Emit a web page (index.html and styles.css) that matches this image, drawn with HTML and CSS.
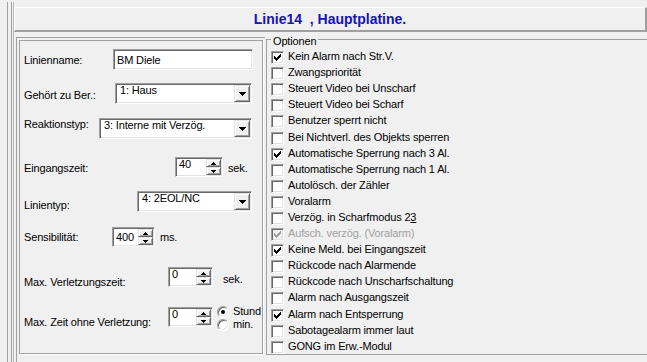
FILE: index.html
```html
<!DOCTYPE html>
<html lang="de">
<head>
<meta charset="utf-8">
<title>Linie14</title>
<link rel="stylesheet" href="styles.css">
</head>
<body>
<div class="app">
  <div class="rails"><div class="rail r1"></div><div class="rail r2"></div><div class="rail r3"></div></div>
  <div class="main">
    <div class="title">Linie14  , Hauptplatine.</div>
    <div class="content">
      <div class="leftpanel">
        <div class="leftbox">
          <div class="row f-name">
            <span class="lbl">Linienname:</span>
            <div class="edit edit-name">BM Diele</div>
          </div>
          <div class="row f-ber">
            <span class="lbl">Gehört zu Ber.:</span>
            <div class="combo combo-ber"><span class="val">1: Haus</span><span class="dd"><svg width="7" height="4" viewBox="0 0 7 4" shape-rendering="crispEdges"><path d="M0 0h7v1h-7z M1 1h5v1h-5z M2 2h3v1h-3z M3 3h1v1h-1z" fill="#000"/></svg></span></div>
          </div>
          <div class="row f-reak">
            <span class="lbl">Reaktionstyp:</span>
            <div class="combo combo-reak"><span class="val">3: Interne mit Verzög.</span><span class="dd"><svg width="7" height="4" viewBox="0 0 7 4" shape-rendering="crispEdges"><path d="M0 0h7v1h-7z M1 1h5v1h-5z M2 2h3v1h-3z M3 3h1v1h-1z" fill="#000"/></svg></span></div>
          </div>
          <div class="row f-eing">
            <span class="lbl">Eingangszeit:</span>
            <div class="spin spin-eing"><span class="val">40</span><span class="spinbtn"><span class="sb"><svg width="5" height="3" viewBox="0 0 5 3" shape-rendering="crispEdges"><path d="M2 0h1v1h-1z M1 1h3v1h-3z M0 2h5v1h-5z" fill="#000"/></svg></span><span class="sb"><svg width="5" height="3" viewBox="0 0 5 3" shape-rendering="crispEdges"><path d="M0 0h5v1h-5z M1 1h3v1h-3z M2 2h1v1h-1z" fill="#000"/></svg></span></span></div>
            <span class="unit unit-eing">sek.</span>
          </div>
          <div class="row f-typ">
            <span class="lbl">Linientyp:</span>
            <div class="combo combo-typ"><span class="val">4: 2EOL/NC</span><span class="dd"><svg width="7" height="4" viewBox="0 0 7 4" shape-rendering="crispEdges"><path d="M0 0h7v1h-7z M1 1h5v1h-5z M2 2h3v1h-3z M3 3h1v1h-1z" fill="#000"/></svg></span></div>
          </div>
          <div class="row f-sens">
            <span class="lbl">Sensibilität:</span>
            <div class="spin spin-sens"><span class="val">400</span><span class="spinbtn"><span class="sb"><svg width="5" height="3" viewBox="0 0 5 3" shape-rendering="crispEdges"><path d="M2 0h1v1h-1z M1 1h3v1h-3z M0 2h5v1h-5z" fill="#000"/></svg></span><span class="sb"><svg width="5" height="3" viewBox="0 0 5 3" shape-rendering="crispEdges"><path d="M0 0h5v1h-5z M1 1h3v1h-3z M2 2h1v1h-1z" fill="#000"/></svg></span></span></div>
            <span class="unit unit-sens">ms.</span>
          </div>
          <div class="row f-maxv">
            <span class="lbl">Max. Verletzungszeit:</span>
            <div class="spin spin-max"><span class="val">0</span><span class="spinbtn"><span class="sb"><svg width="5" height="3" viewBox="0 0 5 3" shape-rendering="crispEdges"><path d="M2 0h1v1h-1z M1 1h3v1h-3z M0 2h5v1h-5z" fill="#000"/></svg></span><span class="sb"><svg width="5" height="3" viewBox="0 0 5 3" shape-rendering="crispEdges"><path d="M0 0h5v1h-5z M1 1h3v1h-3z M2 2h1v1h-1z" fill="#000"/></svg></span></span></div>
            <span class="unit unit-maxv">sek.</span>
          </div>
          <div class="row f-maxz">
            <span class="lbl">Max. Zeit ohne Verletzung:</span>
            <div class="spin spin-max"><span class="val">0</span><span class="spinbtn"><span class="sb"><svg width="5" height="3" viewBox="0 0 5 3" shape-rendering="crispEdges"><path d="M2 0h1v1h-1z M1 1h3v1h-3z M0 2h5v1h-5z" fill="#000"/></svg></span><span class="sb"><svg width="5" height="3" viewBox="0 0 5 3" shape-rendering="crispEdges"><path d="M0 0h5v1h-5z M1 1h3v1h-3z M2 2h1v1h-1z" fill="#000"/></svg></span></span></div>
            <div class="radios">
              <div class="radio"><span class="rb on"></span><span>Stund</span></div>
              <div class="radio"><span class="rb"></span><span>min.</span></div>
            </div>
          </div>
        </div>
      </div>
      <fieldset class="options">
        <legend>Optionen</legend>
        <div class="opt"><span class="cb"><svg width="7" height="7" viewBox="0 0 7 7" shape-rendering="crispEdges"><path d="M0 2h1v3h-1z M1 3h1v3h-1z M2 4h1v3h-1z M3 3h1v3h-1z M4 2h1v3h-1z M5 1h1v3h-1z M6 0h1v3h-1z" fill="#000"/></svg></span><span class="t">Kein Alarm nach Str.V.</span></div>
        <div class="opt"><span class="cb"></span><span class="t">Zwangspriorität</span></div>
        <div class="opt"><span class="cb"></span><span class="t">Steuert Video bei Unscharf</span></div>
        <div class="opt"><span class="cb"></span><span class="t">Steuert Video bei Scharf</span></div>
        <div class="opt"><span class="cb"></span><span class="t">Benutzer sperrt nicht</span></div>
        <div class="opt"><span class="cb"></span><span class="t">Bei Nichtverl. des Objekts sperren</span></div>
        <div class="opt"><span class="cb"><svg width="7" height="7" viewBox="0 0 7 7" shape-rendering="crispEdges"><path d="M0 2h1v3h-1z M1 3h1v3h-1z M2 4h1v3h-1z M3 3h1v3h-1z M4 2h1v3h-1z M5 1h1v3h-1z M6 0h1v3h-1z" fill="#000"/></svg></span><span class="t">Automatische Sperrung nach 3 Al.</span></div>
        <div class="opt"><span class="cb"></span><span class="t">Automatische Sperrung nach 1 Al.</span></div>
        <div class="opt"><span class="cb"></span><span class="t">Autolösch. der Zähler</span></div>
        <div class="opt"><span class="cb"></span><span class="t">Voralarm</span></div>
        <div class="opt"><span class="cb"></span><span class="t">Verzög. in Scharfmodus 2<u>3</u></span></div>
        <div class="opt dis"><span class="cb"><svg width="7" height="7" viewBox="0 0 7 7" shape-rendering="crispEdges"><path d="M0 2h1v3h-1z M1 3h1v3h-1z M2 4h1v3h-1z M3 3h1v3h-1z M4 2h1v3h-1z M5 1h1v3h-1z M6 0h1v3h-1z" fill="#a0a0a0"/></svg></span><span class="t">Aufsch. verzög. (Voralarm)</span></div>
        <div class="opt"><span class="cb"><svg width="7" height="7" viewBox="0 0 7 7" shape-rendering="crispEdges"><path d="M0 2h1v3h-1z M1 3h1v3h-1z M2 4h1v3h-1z M3 3h1v3h-1z M4 2h1v3h-1z M5 1h1v3h-1z M6 0h1v3h-1z" fill="#000"/></svg></span><span class="t">Keine Meld. bei Eingangszeit</span></div>
        <div class="opt"><span class="cb"></span><span class="t">Rückcode nach Alarmende</span></div>
        <div class="opt"><span class="cb"></span><span class="t">Rückcode nach Unscharfschaltung</span></div>
        <div class="opt"><span class="cb"></span><span class="t">Alarm nach Ausgangszeit</span></div>
        <div class="opt"><span class="cb"><svg width="7" height="7" viewBox="0 0 7 7" shape-rendering="crispEdges"><path d="M0 2h1v3h-1z M1 3h1v3h-1z M2 4h1v3h-1z M3 3h1v3h-1z M4 2h1v3h-1z M5 1h1v3h-1z M6 0h1v3h-1z" fill="#000"/></svg></span><span class="t">Alarm nach Entsperrung</span></div>
        <div class="opt"><span class="cb"></span><span class="t">Sabotagealarm immer laut</span></div>
        <div class="opt"><span class="cb"></span><span class="t">GONG im Erw.-Modul</span></div>
      </fieldset>
    </div>
  </div>
</div>
</body>
</html>
```

FILE: styles.css
```css
* { box-sizing: border-box; }
html, body { margin: 0; padding: 0; }
body {
  width: 647px;
  height: 362px;
  overflow: hidden;
  background: #f0f0f0;
  font-family: "Liberation Sans", Arial, sans-serif;
  font-size: 11px;
  letter-spacing: -0.15px;
  color: #000;
}
.app { display: flex; height: 362px; }

.rails { display: flex; flex: none; width: 14px; padding-left: 7px; margin-top: 2px; }
.rail { border-left: 1px solid #a0a0a0; }
.r1 { width: 4px; }
.r2 { width: 2px; }
.r3 { width: 1px; border-left-color: #b9b9b9; }

.main { flex: 1; display: flex; flex-direction: column; min-width: 0; }
.title {
  margin-top: 7px;
  height: 25px;
  border-top: 1px solid #fff;
  border-left: 1px solid #fff;
  border-bottom: 2px solid #a0a0a0;
  border-right: 2px solid #a0a0a0;
  text-align: center;
  font-weight: bold;
  font-size: 14px;
  line-height: 22px;
  letter-spacing: 0;
  color: #1414b8;
  white-space: pre;
}

.content { display: flex; align-items: flex-start; }

.leftpanel {
  flex: none;
  margin: 5px 0 0 2px;
  border-top: 1px solid #a0a0a0;
  border-left: 1px solid #a0a0a0;
  padding: 2px 2px 10px 2px;
}
.leftbox {
  width: 244px;
  height: 314px;
  border: 1px solid #a0a0a0;
  box-shadow: 1px 1px 0 #fff;
  overflow: hidden;
  padding-left: 4px;
}

.row { display: flex; align-items: flex-start; white-space: nowrap; }
.lbl { flex: none; line-height: 13px; white-space: nowrap; }

.f-name { margin-top: 8px; }
.f-name .lbl { width: 89px; margin-top: 5px; }
.f-ber { margin-top: 13px; }
.f-ber .lbl { width: 91px; margin-top: 6px; }
.f-reak { margin-top: 14px; }
.f-reak .lbl { width: 75px; margin-top: 0; }
.f-eing { margin-top: 18px; }
.f-eing .lbl { width: 151px; margin-top: 5px; }
.f-typ { margin-top: 14px; }
.f-typ .lbl { width: 113px; margin-top: 8px; }
.f-sens { margin-top: 15px; }
.f-sens .lbl { width: 88px; margin-top: 4px; }
.f-maxv { margin-top: 20px; }
.f-maxv .lbl { width: 144px; margin-top: 9px; }
.f-maxz { margin-top: 18px; }
.f-maxz .lbl { width: 144px; margin-top: 9px; }

.edit, .combo, .spin {
  flex: none;
  border: 1px solid;
  border-color: #a0a0a0 #fff #fff #a0a0a0;
  box-shadow: inset 1px 1px 0 #696969, inset -1px -1px 0 #e3e3e3;
  background: #fff;
}
.edit { height: 21px; padding: 4px 0 0 3px; line-height: 13px; }
.edit-name { width: 140px; }

.combo { display: flex; height: 21px; padding: 1px; }
.combo .val { flex: 1; padding-left: 3px; line-height: 11px; overflow: hidden; }
.combo-ber { width: 137px; }
.combo-reak { width: 153px; }
.combo-typ { width: 115px; }

.dd, .sb {
  flex: none;
  background: #f0f0f0;
  border: 1px solid;
  border-color: #e3e3e3 #696969 #696969 #e3e3e3;
  box-shadow: inset 1px 1px 0 #fff, inset -1px -1px 0 #a0a0a0;
  display: flex;
  align-items: center;
  justify-content: center;
}
.dd { width: 16px; height: 17px; }
.dd svg, .sb svg, .cb svg { display: block; }

.spin { display: flex; height: 20px; padding: 1px; }
.spin .val { flex: 1; padding-left: 2px; line-height: 11px; }
.spin-eing { width: 48px; }
.spin-sens { width: 43px; }
.spin-sens .val { padding-top: 3px; }
.spin-max { width: 45px; }
.spinbtn { flex: none; width: 15px; display: flex; flex-direction: column; }
.sb { flex: 1; }

.unit { line-height: 13px; }
.unit-eing { margin: 5px 0 0 5px; }
.unit-sens { margin: 4px 0 0 5px; }
.unit-maxv { margin: 6px 0 0 10px; }

.radios { margin: -2px 0 0 4px; }
.radio { display: flex; align-items: center; height: 13px; line-height: 13px; }
.rb {
  flex: none;
  width: 12px;
  height: 12px;
  margin-right: 4px;
  border-radius: 50%;
  border: 1px solid;
  border-color: #a0a0a0 #fff #fff #a0a0a0;
  box-shadow: inset 1px 1px 0 #696969, inset -1px -1px 0 #e3e3e3;
  background: #fff;
  display: flex;
  align-items: center;
  justify-content: center;
}
.rb.on::after {
  content: "";
  width: 4px;
  height: 4px;
  border-radius: 50%;
  background: #000;
}

.options {
  flex: 1;
  min-width: 0;
  margin: 0 -20px 0 1px;
  padding: 1.5px 0 0 4px;
  border: 1px solid #a0a0a0;
}
.options legend {
  margin-left: 0;
  padding: 3px 2px 0;
  line-height: 12px;
}
.opt { display: flex; align-items: center; height: 16.1px; white-space: nowrap; }
.opt .t { margin-left: 4px; line-height: 13px; }
.cb {
  flex: none;
  width: 13px;
  height: 13px;
  margin-top: 2px;
  border: 1px solid;
  border-color: #a0a0a0 #fff #fff #a0a0a0;
  box-shadow: inset 1px 1px 0 #696969, inset -1px -1px 0 #e3e3e3;
  background: #fff;
  padding: 2px 0 0 2px;
}
.opt.dis .cb { background: #f0f0f0; }
.opt.dis .t { color: #a0a0a0; }
```
